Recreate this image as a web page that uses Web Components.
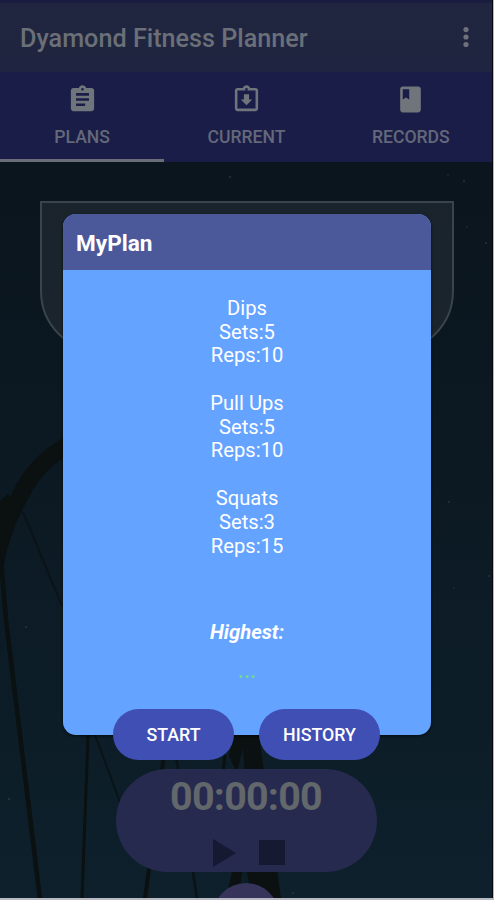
<!DOCTYPE html>
<html lang="en">
<head>
<meta charset="utf-8">
<title>Dyamond Fitness Planner</title>
<style>
  body { margin: 0; background: #b9b9c3; font-family: Roboto, "Liberation Sans", sans-serif; }
</style>
</head>
<body>
<fitness-app></fitness-app>

<script>
class NightScene extends HTMLElement {
  constructor() {
    super();
    this.attachShadow({ mode: "open" });
    this.shadowRoot.innerHTML = `
      <style>
        :host { display: block; }
        svg { display: block; }
      </style>
      <svg width="492" height="737" viewBox="0 162 492 737" fill="none">
        <defs>
          <linearGradient id="sky" x1="0" y1="0" x2="0" y2="1">
            <stop offset="0" stop-color="#0b151d"/>
            <stop offset=".5" stop-color="#0c1a24"/>
            <stop offset="1" stop-color="#0d202b"/>
          </linearGradient>
        </defs>
        <rect y="162" width="492" height="737" fill="url(#sky)"/>
        <!-- wheel rim -->
        <path d="M-6 570 C0 535 12 510 20 496 C30 475 44 458 68 445" stroke="#0b1011" stroke-width="17"/>
        <path d="M-4 518 L14 500" stroke="#0b1011" stroke-width="18"/>
        <!-- spokes -->
        <path d="M1 560 L6 620 L40 899" stroke="#0b1011" stroke-width="4.5"/>
        <path d="M23 512 L62 606" stroke="#0a1316" stroke-width="2"/>
        <path d="M88 735 L82 899" stroke="#0b1011" stroke-width="3"/>
        <path d="M95 735 L121 805" stroke="#0a1316" stroke-width="2"/>
        <path d="M164 755 L145 899" stroke="#0b1011" stroke-width="4"/>
        <path d="M176 755 L197 899" stroke="#0a1316" stroke-width="2.5"/>
        <!-- hub support -->
        <path d="M233 735 L259 735 L281 899 L226 899 L238 845 L240 780 L229 756 Z" fill="#0b1011"/>
        <path d="M237 772 L243 748 L245 776 Z M238 899 L244 860 L253 899 Z" fill="#0c1d26"/>
        <path d="M225 755 L223 772" stroke="#0b1011" stroke-width="3"/>
        <g fill="#27333b">
          <circle cx="230" cy="177" r="1"/><circle cx="464" cy="181" r="1"/>
          <circle cx="448" cy="175" r=".8"/><circle cx="486" cy="243" r="1"/>
          <circle cx="467" cy="227" r=".8"/><circle cx="449" cy="502" r="1"/>
          <circle cx="454" cy="588" r=".8"/><circle cx="489" cy="576" r="1"/>
          <circle cx="26" cy="627" r="1"/><circle cx="9" cy="799" r="1.2"/>
          <circle cx="293" cy="893" r="1"/>
        </g>
      </svg>
    `;
  }
}
customElements.define("night-scene", NightScene);

class AppBar extends HTMLElement {
  constructor() {
    super();
    this.attachShadow({ mode: "open" });
    this.shadowRoot.innerHTML = `
      <style>
        :host {
          display: flex; align-items: center; justify-content: space-between;
          box-sizing: border-box; height: 72px; padding: 5px 23px 0 20px;
          background: linear-gradient(#1a1c3f 2px, #20263f 4px, #1f2540);
          color: #6b6f78; font-size: 25.2px; font-weight: 500; white-space: nowrap;
        }
        svg { display: block; }
      </style>
      <slot></slot>
      <svg width="6" height="24" viewBox="0 0 6 24" fill="#6d7179">
        <circle cx="3" cy="2.6" r="2.6"/><circle cx="3" cy="10" r="2.6"/><circle cx="3" cy="17.500" r="2.6"/>
      </svg>
    `;
  }
}
customElements.define("app-bar", AppBar);

const TAB_ICONS = {
  assignment: "M19 3h-4.18C14.4 1.84 13.3 1 12 1s-2.4.84-2.82 2H5c-1.1 0-2 .9-2 2v14c0 1.1.9 2 2 2h14c1.1 0 2-.9 2-2V5c0-1.1-.9-2-2-2zm-7 0c.55 0 1 .45 1 1s-.45 1-1 1-1-.45-1-1 .45-1 1-1zm2 14H7v-2h7v2zm3-4H7v-2h10v2zm0-4H7V7h10v2z",
  returned: "M19 3h-4.18C14.4 1.84 13.3 1 12 1s-2.4.84-2.82 2H5c-1.1 0-2 .9-2 2v14c0 1.1.9 2 2 2h14c1.1 0 2-.9 2-2V5c0-1.1-.9-2-2-2zm-7 0c.55 0 1 .45 1 1s-.45 1-1 1-1-.45-1-1 .45-1 1-1zM5 19V5h14v14H5zM16.500 12H14V8h-4v4H7.500l4.500 4.500z",
  book: "M18 2H6c-1.1 0-2 .9-2 2v16c0 1.1.9 2 2 2h12c1.1 0 2-.9 2-2V4c0-1.100-.9-2-2-2zM6 4h5v8l-2.500-1.500L6 12V4z"
};

class TabItem extends HTMLElement {
  constructor() {
    super();
    this.attachShadow({ mode: "open" });
    this.shadowRoot.innerHTML = `
      <style>
        :host {
          flex: 1; display: flex; flex-direction: column; align-items: center;
          box-sizing: border-box; padding-top: 12px;
          border-bottom: 3px solid transparent;
        }
        :host([selected]) { border-bottom-color: #6a6d78; }
        svg { display: block; }
        span { margin-top: 11px; line-height: 22px; font-size: 17.6px; font-weight: 500; }
      </style>
      <svg width="31" height="31" viewBox="0 0 24 24"><path fill="#70747b" fill-rule="evenodd" d="${TAB_ICONS[this.getAttribute("icon")]}"/></svg>
      <span><slot></slot></span>
    `;
  }
}
customElements.define("tab-item", TabItem);

class TabBar extends HTMLElement {
  constructor() {
    super();
    this.attachShadow({ mode: "open" });
    this.shadowRoot.innerHTML = `
      <style>
        :host { display: flex; height: 90px; margin-right: -1px; background: #191d47; color: #64687a; }
      </style>
      <slot></slot>
    `;
  }
}
customElements.define("tab-bar", TabBar);

class StopWatch extends HTMLElement {
  constructor() {
    super();
    this.attachShadow({ mode: "open" });
    this.shadowRoot.innerHTML = `
      <style>
        :host {
          display: flex; flex-direction: column; align-items: center;
          width: 261px; height: 103px; border-radius: 52px; background: #272a4f;
        }
        .time { margin-top: 4px; line-height: 48px; font-size: 39.500px; letter-spacing: -.8px; font-weight: 700; color: #62676b; }
        svg { display: block; margin: 17px 0 0 4px; }
      </style>
      <div class="time"><slot></slot></div>
      <svg width="74" height="30" viewBox="0 0 74 30" fill="#151931">
        <path d="M2 1 L25 15 L2 29 Z"/>
        <rect x="48" y="2" width="26" height="25"/>
      </svg>
    `;
  }
}
customElements.define("stop-watch", StopWatch);

class PlanButton extends HTMLElement {
  constructor() {
    super();
    this.attachShadow({ mode: "open" });
    this.shadowRoot.innerHTML = `
      <style>
        :host { display: block; }
        button {
          display: block; width: 121px; height: 51px; padding: 1px 0 0 1px; border: 0;
          border-radius: 26px; background: #404fb4; color: #fff;
          font: 500 17.8px/50px Roboto, sans-serif;
        }
      </style>
      <button><slot></slot></button>
    `;
  }
}
customElements.define("plan-button", PlanButton);

class PlanExercise extends HTMLElement {
  constructor() {
    super();
    this.attachShadow({ mode: "open" });
    this.shadowRoot.innerHTML = `
      <style>
        :host { display: block; margin-bottom: 23.7px; font-size: 20.2px; line-height: 23.8px; }
      </style>
      <div>${this.getAttribute("name")}</div>
      <div>Sets:${this.getAttribute("sets")}</div>
      <div>Reps:${this.getAttribute("reps")}</div>
    `;
  }
}
customElements.define("plan-exercise", PlanExercise);

class PlanDialog extends HTMLElement {
  constructor() {
    super();
    this.attachShadow({ mode: "open" });
    this.shadowRoot.innerHTML = `
      <style>
        :host { display: block; width: 368px; }
        .card {
          height: 521px; border-radius: 13px; overflow: hidden;
          background: #64a3ff; color: #fff; text-align: center;
          box-shadow: 0 1px 3px rgba(0, 0, 0, .7);
        }
        header {
          box-sizing: border-box; height: 56px; padding: 2px 13px 0; background: #4b599b;
          line-height: 56px; font-size: 22.6px; font-weight: 700; text-align: left;
        }
        .exercises { padding-top: 26.8px; }
        .highest { margin-top: 61.2px; line-height: 24px; font-size: 20.2px; font-weight: 700; font-style: italic; }
        .score { margin-top: 15px; line-height: 24px; font-size: 22px; font-weight: 500; color: #70dc83; }
        .actions { display: flex; justify-content: center; gap: 25px; margin: -26px 2px 0 0; }
      </style>
      <div class="card">
        <header>${this.getAttribute("heading")}</header>
        <div class="exercises"><slot></slot></div>
        <div class="highest">Highest:</div>
        <div class="score">...</div>
      </div>
      <div class="actions"><slot name="action"></slot></div>
    `;
  }
}
customElements.define("plan-dialog", PlanDialog);

class FitnessApp extends HTMLElement {
  constructor() {
    super();
    this.attachShadow({ mode: "open" });
    this.shadowRoot.innerHTML = `
      <style>
        :host { display: block; position: relative; width: 492px; height: 898px; overflow: hidden; box-shadow: 1px 0 #05070f; }
        main { position: relative; height: 736px; }
        night-scene { position: absolute; inset: 0; }
        .page { position: relative; display: flex; flex-direction: column; align-items: center; padding-top: 39px; }
        .plan {
          box-sizing: border-box; width: 414px; height: 152px; margin: 0 0 416px 2px;
          border: 2px solid #3a444b; border-radius: 0 0 62px 62px; background: rgba(50, 58, 66, .4);
        }
        .add { width: 66px; height: 66px; margin-top: 11px; border-radius: 50%; background: #36345a; }
        plan-dialog { position: absolute; left: 63px; top: 214px; }
      </style>
      <app-bar>Dyamond Fitness Planner</app-bar>
      <tab-bar>
        <tab-item icon="assignment" selected>PLANS</tab-item>
        <tab-item icon="returned">CURRENT</tab-item>
        <tab-item icon="book">RECORDS</tab-item>
      </tab-bar>
      <main>
        <night-scene></night-scene>
        <div class="page">
          <div class="plan"></div>
          <stop-watch>00:00:00</stop-watch>
          <div class="add"></div>
        </div>
      </main>
      <plan-dialog heading="MyPlan">
        <plan-exercise name="Dips" sets="5" reps="10"></plan-exercise>
        <plan-exercise name="Pull Ups" sets="5" reps="10"></plan-exercise>
        <plan-exercise name="Squats" sets="3" reps="15"></plan-exercise>
        <plan-button slot="action">START</plan-button>
        <plan-button slot="action">HISTORY</plan-button>
      </plan-dialog>
    `;
  }
}
customElements.define("fitness-app", FitnessApp);
</script>
</body>
</html>
